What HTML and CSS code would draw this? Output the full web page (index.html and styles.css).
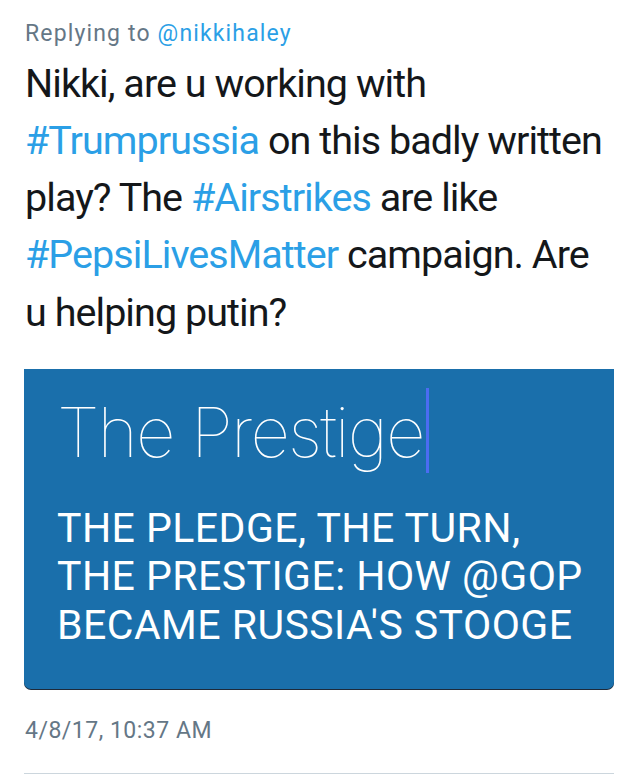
FILE: index.html
```html
<!DOCTYPE html>
<html>
<head>
<meta charset="utf-8">
<link rel="stylesheet" href="styles.css">
</head>
<body>
<div class="tweet">
  <div class="reply">Replying to <span class="link">@nikkihaley</span></div>
  <p class="text">Nikki, are u working with<br><span class="link">#Trumprussia</span> on this badly written<br>play? The <span class="link">#Airstrikes</span> are like<br><span class="link">#PepsiLivesMatter</span> campaign. Are<br>u helping putin?</p>
  <div class="card">
    <div class="title-row"><span class="title">The Prestige</span><span class="cursor"></span></div>
    <div class="headline">THE PLEDGE, THE TURN,<br>THE PRESTIGE: HOW @GOP<br>BECAME RUSSIA'S STOOGE</div>
  </div>
  <div class="time">4/8/17, 10:37 AM</div>
  <div class="divider"></div>
</div>
</body>
</html>
```

FILE: styles.css
```css
html, body {
  margin: 0;
  padding: 0;
  background: #ffffff;
}
.tweet {
  width: 640px;
  height: 775px;
  padding: 20px 25px 0 25px;
  box-sizing: border-box;
  font-family: "Roboto", sans-serif;
  overflow: hidden;
}
.reply {
  font-size: 23px;
  line-height: 28px;
  letter-spacing: 1.15px;
  color: #657786;
}
.link {
  color: #2b9fe6;
}
.text {
  margin: 6.5px 0 0 0;
  font-size: 39.5px;
  line-height: 57.3px;
  letter-spacing: -0.95px;
  color: #14171a;
  white-space: nowrap;
}
.card {
  margin-top: 28px;
  width: 590px;
  height: 320px;
  margin-left: -1px;
  background: #1a6fab;
  border-radius: 0 0 7px 7px;
  box-shadow: 0 1px 0 #1e2a3a;
  box-sizing: border-box;
  padding: 19px 0 0 33px;
  color: #ffffff;
}
.title-row {
  display: flex;
  align-items: flex-start;
  height: 85px;
}
.title {
  font-family: "Inter", sans-serif;
  font-weight: 100;
  font-size: 69px;
  line-height: 85px;
  padding-top: 2px;
  letter-spacing: -1.9px;
}
.cursor {
  width: 3px;
  height: 85px;
  background: #4b6cf2;
  margin-left: 2px;
}
.headline {
  margin-top: 31px;
  font-size: 41px;
  line-height: 48.5px;
  letter-spacing: 0.45px;
  font-weight: 400;
}
.time {
  margin-top: 28px;
  font-size: 23px;
  line-height: 28px;
  letter-spacing: 0.5px;
  color: #657786;
}
.divider {
  margin-top: 28px;
  height: 1px;
  background: #ccd6dd;
  width: 590px;
  margin-left: -1px;
}
```
